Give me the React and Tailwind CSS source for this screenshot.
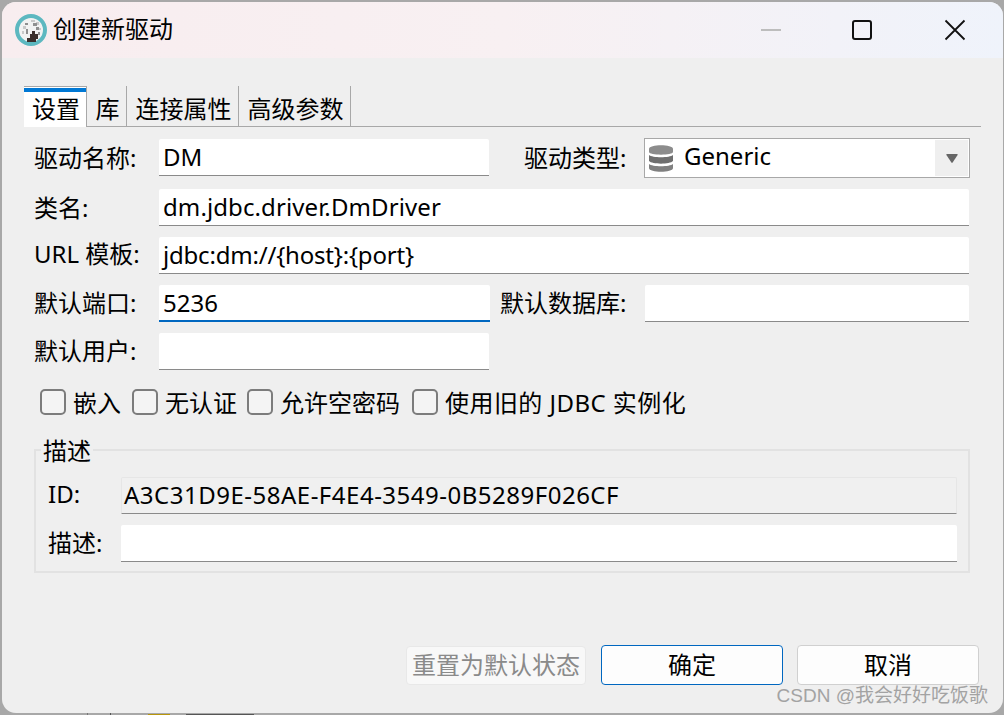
import { useState } from "react";

const FONT = "font-['Noto_Sans','Noto_Sans_CJK_SC',sans-serif]";

function AppIcon() {
  return (
    <svg width="32" height="32" viewBox="0 0 32 32" className="shrink-0" shapeRendering="crispEdges">
      <circle cx="16" cy="16" r="14" fill="#f2f2f2" stroke="#5db8c0" strokeWidth="4" shapeRendering="auto" />
      <path d="M16 6h4v2h-4zM21 8h3v3h-3zM8 12h3v3H8zM7 17h2v3H7zM24 14h2v2h-2z" fill="#c9c9c9" />
      <path d="M10 9h3v2h-3zM11 15h2v5h-2zM18 9h4v3h-4zM21 13h3v3h-3zM23 18h2v3h-2z" fill="#8f8f8f" />
      <path d="M15 20h2v-3h3v3h3v5h-2v3h-9v-4h3z" fill="#3b2f2c" />
    </svg>
  );
}

function DbIcon() {
  return (
    <svg width="24" height="27" viewBox="0 0 24 27" className="-ml-[1px] shrink-0">
      <path d="M0 4c0-5 24-5 24 0v3c0 3.500-24 3.500-24 0z" fill="#8c8c8c" />
      <path d="M0 10c3 3 21 3 24 0v6c-3 3.500-21 3.500-24 0z" fill="#6f6f6f" />
      <path d="M0 19c3 3 21 3 24 0v4c0 5-24 5-24 0z" fill="#808080" />
    </svg>
  );
}

function Field({ value, className = "", focused = false, disabled = false }) {
  return (
    <div
      className={`flex h-[37px] shrink-0 items-center rounded-t-[2px] text-[24px] leading-none text-black ${
        disabled ? "bg-[#f0f0f0] border border-[#e6e6e6] pl-[2px] pb-[2px]" : "bg-white px-1"
      } ${focused ? "border-b-2 border-b-[#0067c0]" : "border-b border-b-[#8a8a8a]"} ${className}`}
    >
      {value}
    </div>
  );
}

function Label({ children, className = "" }) {
  return <div className={`text-[24px] leading-none text-black whitespace-nowrap ${className}`}>{children}</div>;
}

function Check({ label, className = "", textClass = "" }) {
  return (
    <div className={`flex items-center gap-[7px] ${className}`}>
      <span className="block size-[26px] rounded-[5px] border-2 border-[#7c7c7c] bg-[#f4f4f4]" />
      <span className={`pt-[2px] text-[24px] leading-none whitespace-nowrap ${textClass}`}>{label}</span>
    </div>
  );
}

export default function App() {
  const [tabs] = useState([
    { name: "库", w: "w-[40px]" },
    { name: "连接属性", w: "w-[112px]" },
    { name: "高级参数", w: "w-[112px]" },
  ]);

  return (
    <div className={`relative h-[715px] w-[1004px] overflow-hidden bg-[#a8a8a8] pl-[2px] pt-[2px] pr-[1px] pb-[2px] ${FONT}`}>
      <div className="flex h-full flex-col overflow-hidden rounded-[14px] bg-[#efefef]">
        {/* title bar */}
        <div className="flex h-[56px] shrink-0 items-center bg-gradient-to-r from-[#f8edef] via-[#f8f0f2] to-[#eff3fb] pl-[13px]">
          <AppIcon />
          <span className="mb-[2px] ml-[6px] text-[24px] leading-none text-black">创建新驱动</span>
          <div className="ml-auto flex items-center">
            <span className="block h-[2px] w-[20px] bg-[#bdbdbd]" />
            <span className="ml-[71px] block size-[20px] rounded-[3px] border-2 border-[#111]" />
            <svg width="22" height="22" viewBox="0 0 22 22" className="ml-[72px] mr-[37px]">
              <path d="M1.500 1.500l19 19M20.500 1.500l-19 19" stroke="#111" strokeWidth="1.800" />
            </svg>
          </div>
        </div>

        {/* tabs */}
        <div className="mx-[22px] mt-[28px] flex h-[41px] border-b border-b-[#a8a8a8]">
          <div className="z-10 h-[41px] w-[63px] border-r border-t border-r-[#a8a8a8] border-t-[#a8a8a8] bg-white pl-[2px] text-center text-[24px] leading-[32px] text-black">
            <div className="-ml-[2px] mt-[1px] h-[4px] bg-[#0078d4]" />
            <div className="pt-[1px]">设置</div>
          </div>
          {tabs.map((t) => (
            <div key={t.name} className={`${t.w} border-r border-r-[#a8a8a8] pl-[2px] pt-[7px] text-center text-[24px] leading-[32px] text-black`}>
              {t.name}
            </div>
          ))}
        </div>

        {/* form */}
        <div className="ml-[32px] mr-[33px] mt-[11px] flex flex-col">
          <div className="flex items-center">
            <Label className="w-[125px]">驱动名称:</Label>
            <Field value="DM" className="mb-[2px] w-[330px]" />
            <Label className="ml-[35px] w-[120px]">驱动类型:</Label>
            <div className="flex h-[40px] w-[326px] items-center border border-[#a8a8a8] bg-white pl-[5px] text-[24px] leading-none text-black">
              <DbIcon />
              <span className="mb-[4px] ml-[11px]">Generic</span>
              <div className="ml-auto mr-[1px] flex h-[36px] w-[33px] items-center justify-center bg-[#efefef]">
                <svg width="12" height="9" viewBox="0 0 12 9">
                  <path d="M1 0h10q1 0 .6 1L6.600 8.500q-.6.800-1.200 0L.4 1Q0 0 1 0z" fill="#666" />
                </svg>
              </div>
            </div>
          </div>

          <div className="mt-[11px] flex items-center">
            <Label className="w-[125px]">类名:</Label>
            <Field value="dm.jdbc.driver.DmDriver" className="w-[810px] tracking-[0.1px]" />
          </div>
          <div className="mt-[11px] flex items-center">
            <Label className="w-[125px] pb-[4px]">URL 模板:</Label>
            <Field value="jdbc:dm://{host}:{port}" className="w-[810px] tracking-[-0.2px]" />
          </div>
          <div className="mt-[11px] flex items-center">
            <Label className="w-[125px] pb-[2px]">默认端口:</Label>
            <Field value="5236" focused className="w-[331px]" />
            <Label className="ml-[10px] w-[145px] pb-[2px]">默认数据库:</Label>
            <Field value="" className="w-[324px]" />
          </div>
          <div className="mt-[11px] flex items-center">
            <Label className="w-[125px] pb-[2px]">默认用户:</Label>
            <Field value="" className="w-[330px]" />
          </div>

          <div className="ml-[6px] mt-[18px] flex h-[28px] items-center">
            <Check label="嵌入" />
            <Check label="无认证" className="ml-[11px]" />
            <Check label="允许空密码" className="ml-[10px]" />
            <Check label="使用旧的 JDBC 实例化" className="ml-[12px]" textClass="tracking-[0.45px]" />
          </div>

          {/* 描述 group */}
          <div className="relative mt-[33px] h-[124px] w-[936px] border-2 border-[#e2e2e2] pl-[12px] pt-[26px]">
            <span className="absolute left-[5px] top-[-14px] bg-[#efefef] px-[2px] text-[24px] leading-[28px] text-black">描述</span>
            <div className="flex items-center">
              <Label className="w-[73px] pb-[4px]">ID:</Label>
              <Field value="A3C31D9E-58AE-F4E4-3549-0B5289F026CF" disabled className="w-[836px] tracking-[0.5px]" />
            </div>
            <div className="mt-[11px] flex items-center">
              <Label className="w-[73px] pb-[2px]">描述:</Label>
              <Field value="" className="w-[836px]" />
            </div>
          </div>
        </div>

        {/* buttons */}
        <div className="ml-[404px] mt-[72px] flex items-center">
          <div className="flex h-[39px] w-[180px] items-center justify-center rounded-[4px] border border-[#e8e8e8] bg-[#f8f8f8] text-[24px] leading-none text-[#8a8a8a]">
            重置为默认状态
          </div>
          <div className="ml-[15px] flex h-[40px] w-[182px] items-center justify-center rounded-[4px] border border-[#0067c0] bg-[#fdfdfd] text-[24px] leading-none text-black">
            确定
          </div>
          <div className="ml-[14px] flex h-[40px] w-[182px] items-center justify-center rounded-[4px] border border-[#d0d0d0] bg-[#fdfdfd] text-[24px] leading-none text-black">
            取消
          </div>
        </div>
      </div>

      {/* watermark */}
      <span className="absolute right-[16px] top-[684px] font-['Liberation_Sans','Noto_Sans_CJK_SC',sans-serif] text-[19px] leading-[24px] whitespace-nowrap text-[#a3a3a3]">
        CSDN @我会好好吃饭歌
      </span>

      {/* bits of the window behind, showing under the dialog */}
      <span className="absolute bottom-0 left-[148px] h-[1px] w-[22px] bg-[#b8960c]" />
      <span className="absolute bottom-0 left-[186px] h-[1px] w-[68px] bg-[#555]" />
      <span className="absolute bottom-0 left-[87px] h-[2px] w-[1px] bg-[#777]" />
      <span className="absolute bottom-0 left-[110px] h-[2px] w-[1px] bg-[#555]" />
    </div>
  );
}
